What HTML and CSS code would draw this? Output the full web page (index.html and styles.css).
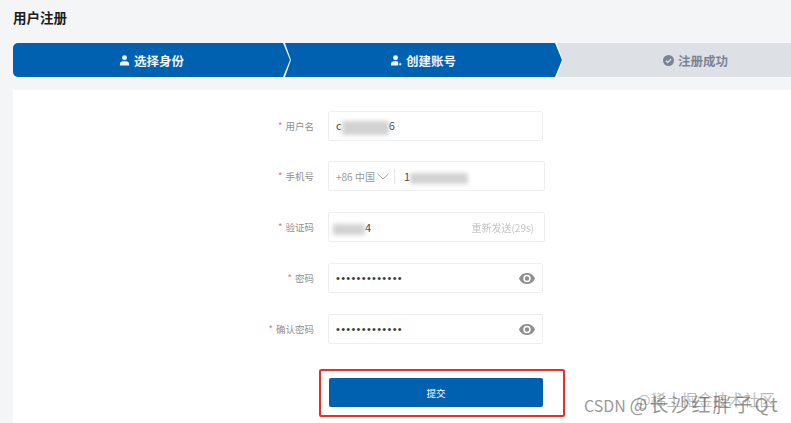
FILE: index.html
```html
<!doctype html>
<html lang="zh-CN">
  <head>
    <meta charset="UTF-8" />
    <title>用户注册</title>
    <link rel="stylesheet" href="styles.css">
  </head>
  <body>
    <div class="page">
      <h2 class="page-title">用户注册</h2>

      <div class="steps">
        <div class="step step-first">
          <svg class="step-icon" viewBox="0 0 12 12"><circle cx="6" cy="3" r="2.700" fill="currentColor"/><path d="M1 11.500V9.600C1 7.800 2.600 6.800 4 6.800h4c1.400 0 3 1 3 2.800v1.900z" fill="currentColor"/></svg>
          选择身份
        </div>
        <div class="step step-middle">
          <svg class="step-icon" viewBox="0 0 12 12"><circle cx="5" cy="3" r="2.700" fill="currentColor"/><path d="M0 11.500V9.600C0 7.800 1.600 6.800 3 6.800h3.500c.6 0 1 .2 1.300.5v4.200z" fill="currentColor"/><path d="M10 8.500v3M8.500 10h3" stroke="currentColor" stroke-width="1" fill="none"/></svg>
          创建账号
        </div>
        <div class="step step-last">
          <svg class="step-icon" viewBox="0 0 12 12"><circle cx="6" cy="6" r="6" fill="currentColor"/><path d="M3.200 6.200l2 2 3.600-3.800" stroke="#dde1e6" stroke-width="1.400" fill="none"/></svg>
          注册成功
        </div>
      </div>

      <form class="panel">
        <div class="row row-first">
          <label class="row-label"><span class="star">*</span>用户名</label>
          <div class="field">
            <span class="value">c<span class="masked masked-name"></span>6</span>
          </div>
        </div>

        <div class="row">
          <label class="row-label"><span class="star">*</span>手机号</label>
          <div class="field field-wide">
            <span class="area">+86 中国</span>
            <svg class="chevron" viewBox="0 0 12 7"><path d="M.5.8L6 6l5.500-5.200" stroke="#a9a9a9" fill="none"/></svg>
            <span class="divider"></span>
            <span class="value">1<span class="masked masked-phone"></span></span>
          </div>
        </div>

        <div class="row">
          <label class="row-label"><span class="star">*</span>验证码</label>
          <div class="field field-wide">
            <span class="value value-grow"><span class="masked masked-code"></span>4</span>
            <span class="resend">重新发送(29s)</span>
          </div>
        </div>

        <div class="row">
          <label class="row-label"><span class="star">*</span>密码</label>
          <div class="field">
            <span class="dots">•••••••••••••</span>
            <svg class="eye" viewBox="0 0 16 11"><path d="M8 0C4.400 0 1.400 2.200 0 5.500 1.400 8.800 4.400 11 8 11s6.600-2.200 8-5.500C14.600 2.200 11.600 0 8 0zm0 9.200a3.700 3.700 0 1 1 0-7.400 3.700 3.700 0 0 1 0 7.400zM8 3.300a2.200 2.200 0 1 0 0 4.400 2.200 2.200 0 0 0 0-4.400z" fill="#8f8f8f"/></svg>
          </div>
        </div>

        <div class="row">
          <label class="row-label"><span class="star">*</span>确认密码</label>
          <div class="field">
            <span class="dots">•••••••••••••</span>
            <svg class="eye" viewBox="0 0 16 11"><path d="M8 0C4.400 0 1.400 2.200 0 5.500 1.400 8.800 4.400 11 8 11s6.600-2.200 8-5.500C14.600 2.200 11.600 0 8 0zm0 9.200a3.700 3.700 0 1 1 0-7.400 3.700 3.700 0 0 1 0 7.400zM8 3.300a2.200 2.200 0 1 0 0 4.400 2.200 2.200 0 0 0 0-4.400z" fill="#8f8f8f"/></svg>
          </div>
        </div>

        <div class="submit-box">
          <button type="button" class="submit">提交</button>
        </div>
      </form>

      <div class="watermark">
        <span class="mark-back">@稀土掘金技术社区</span>
        <span class="mark-front">CSDN <span class="mark-name">@长沙红胖子Qt</span></span>
      </div>
    </div>
  </body>
</html>
```

FILE: styles.css
```css
body {
  margin: 0;
  font-family: "Noto Sans CJK SC", "Noto Sans", sans-serif;
  background-color: #f3f5f7;
}
.page {
  position: relative;
  height: 423px;
  padding-left: 13px;
  overflow: hidden;
  box-sizing: border-box;
}
.page-title {
  margin: 0;
  padding-top: 8px;
  height: 43px;
  box-sizing: border-box;
  font-size: 13.500px;
  line-height: 18px;
  font-weight: 700;
  color: #1b1b1b;
}
.steps {
  display: flex;
  width: 900px;
  height: 34px;
}
.step {
  display: flex;
  align-items: center;
  justify-content: center;
  gap: 4px;
  flex: none;
  width: 277px;
  font-size: 12.500px;
  font-weight: 700;
  color: #eef4fa;
  background-color: #0061b0;
}
.step-first {
  border-radius: 5px 0 0 5px;
  clip-path: polygon(0 0, 270px 0, 100% 50%, 270px 100%, 0 100%);
}
.step-middle {
  margin-left: -5px;
  clip-path: polygon(0 0, 270px 0, 100% 50%, 270px 100%, 0 100%, 6px 50%);
}
.step-last {
  margin-left: -5px;
  color: #7b8494;
  background-color: #dde1e6;
  clip-path: polygon(0 0, 100% 0, 100% 100%, 0 100%, 6px 50%);
}
.step-icon {
  width: 11px;
  height: 11px;
}
.panel {
  margin-top: 13px;
  padding-top: 21px;
  height: 333px;
  box-sizing: border-box;
  background-color: #fff;
}
.row {
  display: flex;
  align-items: center;
  height: 30px;
  margin-bottom: 21px;
}
.row-first {
  margin-bottom: 20px;
}
.row-label {
  width: 301px;
  text-align: right;
  font-size: 9.500px;
  color: #8f8f8f;
}
.star {
  margin-right: 3px;
  color: #ef6a85;
}
.field {
  display: flex;
  align-items: center;
  width: 215px;
  height: 30px;
  margin-left: 14px;
  padding: 0 7px 0 7px;
  box-sizing: border-box;
  border: 1px solid #eceef0;
  border-radius: 2px;
  font-size: 11px;
  color: #444;
}
.field-wide {
  width: 217px;
  padding-right: 10px;
}
.value-grow {
  flex: 1;
}
.masked {
  display: inline-block;
  vertical-align: middle;
  background-color: #d2d2d2;
  filter: blur(2px);
}
.masked-name {
  width: 47px;
  height: 14px;
}
.masked-phone {
  width: 58px;
  height: 11px;
}
.masked-code {
  width: 32px;
  height: 11px;
  margin-left: -3px;
}
.area {
  color: #999;
  font-size: 10px;
}
.chevron {
  width: 12px;
  height: 7px;
  margin-left: 2px;
}
.divider {
  width: 1px;
  height: 15px;
  margin: 0 9px 0 5px;
  background-color: #e6e6e6;
}
.resend {
  font-size: 10px;
  color: #c4c4c4;
  filter: blur(0.3px);
}
.dots {
  flex: 1;
  font-size: 11px;
  letter-spacing: 1.300px;
  color: #3c3c3c;
  font-family: "Liberation Sans", sans-serif;
}
.eye {
  width: 16px;
  height: 11px;
}
.submit-box {
  width: 246px;
  height: 48px;
  margin: 25px 0 0 306px;
  padding: 9px 0 0 10px;
  box-sizing: border-box;
  border: 2px solid #e8302a;
  border-radius: 2px;
}
.submit {
  display: block;
  width: 214px;
  height: 29px;
  margin: -2px 0 0 -2px;
  padding: 0;
  border: 0;
  border-radius: 2px;
  font: inherit;
  font-size: 9.500px;
  color: #fff;
  background-color: #0061b0;
}
.watermark {
  position: absolute;
  left: 584px;
  top: 391px;
  width: 207px;
  height: 24px;
  font-size: 16px;
  line-height: 24px;
  white-space: nowrap;
  color: rgba(80, 80, 80, 0.6);
}
.mark-back {
  position: absolute;
  left: 52px;
  top: -4px;
  font-size: 15.500px;
  color: rgba(120, 120, 120, 0.5);
}
.mark-front {
  position: absolute;
  left: 0;
  top: 1px;
}
.mark-name {
  font-size: 19px;
  letter-spacing: 2px;
}
```
